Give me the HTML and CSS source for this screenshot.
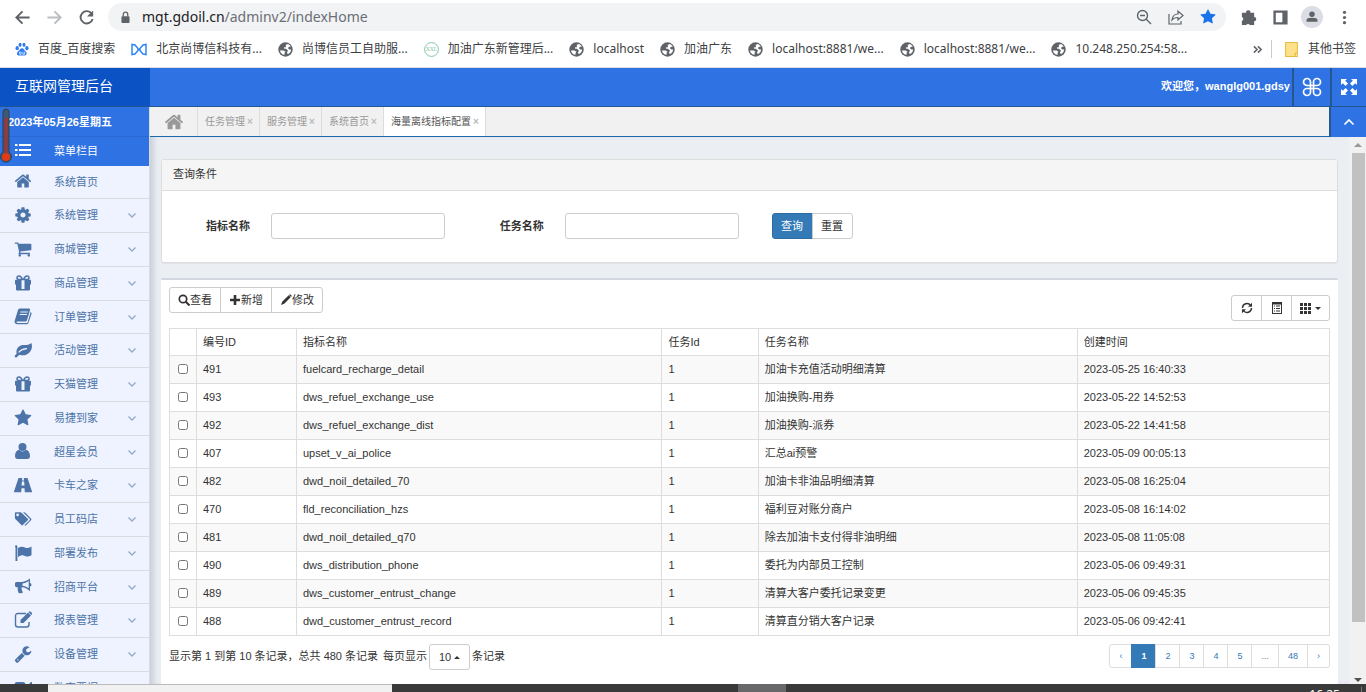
FILE: index.html
```html
<!DOCTYPE html>
<html lang="zh-CN">
<head>
<meta charset="utf-8">
<title>互联网管理后台</title>
<link rel="stylesheet" href="styles.css">
</head>
<body>
<svg class="sprite" aria-hidden="true">
  <symbol id="home" viewBox="0 0 1792 1792"><path d="M1472 992v480q0 26-19 45t-45 19h-384v-384h-256v384h-384q-26 0-45-19t-19-45v-480q0-1 .5-3t.5-3l575-474 575 474q1 2 1 6zm223-69l-62 74q-8 9-21 11h-3q-13 0-21-7l-692-577-692 577q-12 8-24 7-13-2-21-11l-62-74q-8-10-7-23.5t11-21.5l719-599q32-26 76-26t76 26l244 204v-195q0-14 9-23t23-9h192q14 0 23 9t9 23v408l219 182q10 8 11 21.5t-7 23.5z"/></symbol>
  <symbol id="cog" viewBox="0 0 1792 1792"><path d="M1152 896q0-106-75-181t-181-75-181 75-75 181 75 181 181 75 181-75 75-181zm512-109v222q0 12-8 23t-20 13l-185 28q-19 54-39 91 35 50 107 138 10 12 10 25t-9 23q-27 37-99 108t-94 71q-12 0-26-9l-138-108q-44 23-91 38-16 136-29 186-7 28-36 28h-222q-14 0-24.5-8.5t-11.5-21.5l-28-184q-49-16-90-37l-141 107q-10 9-25 9-14 0-25-11-126-114-165-168-7-10-7-23 0-12 8-23 15-21 51-66.5t54-70.5q-27-50-41-99l-183-27q-13-2-21-12.5t-8-23.5v-222q0-12 8-23t19-13l186-28q14-46 39-92-40-57-107-138-10-12-10-24 0-10 9-23 26-36 98.5-107.5t94.5-71.5q13 0 26 10l138 107q44-23 91-38 16-136 29-186 7-28 36-28h222q14 0 24.5 8.5t11.5 21.5l28 184q49 16 90 37l142-107q9-9 24-9 13 0 25 10 129 119 165 170 7 8 7 22 0 12-8 23-15 21-51 66.5t-54 70.5q26 50 41 98l183 28q13 2 21 12.5t8 23.5z"/></symbol>
  <symbol id="cart" viewBox="0 0 1792 1792"><path d="M704 1536q0 52-38 90t-90 38-90-38-38-90 38-90 90-38 90 38 38 90zm896 0q0 52-38 90t-90 38-90-38-38-90 38-90 90-38 90 38 38 90zm128-1088v512q0 24-16.5 42.5t-40.5 21.5l-1044 122q13 60 13 70 0 16-24 64h920q26 0 45 19t19 45-19 45-45 19h-1024q-26 0-45-19t-19-45q0-11 8-31.5t16-36 21.5-40 15.5-29.5l-177-823h-204q-26 0-45-19t-19-45 19-45 45-19h256q16 0 28.5 6.5t19.5 15.5 13 24.5 8 26 5.5 29.5 4.5 26h1201q26 0 45 19t19 45z"/></symbol>
  <symbol id="star" viewBox="0 0 1792 1792"><path d="M1728 647q0 22-26 48l-363 354 86 500q1 7 1 20 0 21-10.5 35.5t-30.5 14.5q-19 0-40-12l-449-236-449 236q-22 12-40 12-21 0-31.5-14.5t-10.5-35.5q0-6 2-20l86-500-364-354q-25-27-25-48 0-37 56-46l502-73 225-455q19-41 49-41t49 41l225 455 502 73q56 9 56 46z"/></symbol>
  <symbol id="wrench" viewBox="0 0 1792 1792"><path d="M448 1472q0-26-19-45t-45-19-45 19-19 45 19 45 45 19 45-19 19-45zm644-420l-682 682q-37 37-90 37-52 0-91-37l-106-108q-38-36-38-90 0-53 38-91l681-681q39 98 114.5 173.5t173.5 114.5zm634-435q0 39-23 106-47 134-164.5 217.5t-258.5 83.5q-185 0-316.5-131.5t-131.5-316.5 131.5-316.5 316.5-131.5q58 0 121.5 16.5t107.5 46.5q16 11 16 28t-16 28l-293 169v224l193 107q5-3 79-48.5t135.5-81 70.5-35.5q15 0 23.5 10t8.5 25z"/></symbol>
  <symbol id="list" viewBox="0 0 18 16"><path d="M1 1h2.500v2H1zM5 1h12v2H5zM1 6h2.500v2H1zM5 6h12v2H5zM1 11h2.500v2H1zM5 11h12v2H5z"/></symbol>
  <symbol id="gift" viewBox="0 0 18 18"><path d="M1 6.500q0-.8.800-.8h5.700v4.800H1zM10.500 5.700h5.700q.8 0 .8.800v4h-6.500zM2 10h5.500v6.500H3q-1 0-1-1zM10.500 10H16v5.500q0 1-1 1h-4.500zM7.500 16.500h3V15h-3z"/><path d="M8.500 5.500C7.500 3 6.200 2 5 2S3 3 3 4s1 1.500 2 1.500zM9.500 5.500C10.500 3 11.800 2 13 2s2 1 2 2-1 1.500-2 1.500z" fill="none" stroke="currentColor" stroke-width="1.500"/></symbol>
  <symbol id="book" viewBox="0 0 18 18"><path fill-rule="evenodd" d="M5.700 1.500H15q1.500 0 1 1.600L13 13.200q-.4 1.200-1.600 1.200H3.200q-1 .1-.7.900.3.700 1.300.700h8.900q.8 0 1-.7L16.600 5q1.300.6.900 2l-3.100 9q-.4 1.300-1.900 1.300H3Q1.200 17.200.7 15.500q-.3-.9 0-1.800L4 3q.4-1.400 1.700-1.500zM6.600 4.500l-.3 1h7.300l.3-1zM5.900 7.100l-.3 1h7.200l.3-1z"/></symbol>
  <symbol id="leaf" viewBox="0 0 18 18"><path fill-rule="evenodd" d="M17.300 2c1.300 3 .7 7-1.800 9.500-3 3-7 3.300-10 2.300L3.500 15.500c-.8.8-1.300 1.200-2.200.7-.9-.6-.8-1.300-.2-1.900l1.500-1.500C1.500 6 6.500 4 10 4c3 0 5.500-.2 7.300-2zM5 11.700c2.700-2.500 4.300-3 8-3.500V7.100C9 7.300 6.700 8.400 4.200 11z"/></symbol>
  <symbol id="user" viewBox="0 0 18 18"><circle cx="8.500" cy="5" r="4"/><path d="M5 7.800Q8.500 11 12 7.800c2.700.5 4 3.200 4 6.200 0 2-1 3-2.500 3h-10C2 17 1 16 1 14c0-3 1.300-5.700 4-6.200z"/></symbol>
  <symbol id="road" viewBox="0 0 18 18"><path fill-rule="evenodd" d="M4.500 2h3.700L8 4.500h2L9.800 2h3.700L18 15.500q.2.800-.5.800h-6.700l-.3-4h-3l-.3 4H.5q-.7 0-.5-.8zM7.900 5.500l-.4 4h3l-.4-4z"/></symbol>
  <symbol id="tags" viewBox="0 0 20 18"><path fill-rule="evenodd" d="M1 2.500Q1 1.500 2 1.500h5q1 0 2 1l6.300 6.200q.8.800 0 1.600l-5.500 5.500q-.8.800-1.600 0L2 9.500q-1-1-1-2zM4 3A1.400 1.400 0 1 0 4 6 1.400 1.400 0 0 0 4 3z"/><path d="M10 1.500h1.300q.8 0 1.600.800l6 6.200q1 1 0 2l-5.500 5.500q-.8.8-1.800 0l5.700-5.600q.8-.8 0-1.600z"/></symbol>
  <symbol id="flag" viewBox="0 0 18 18"><path d="M1 2.500a1.200 1.200 0 1 1 2.400 0V17H1.500V3.500zM4 4c3-2 5-1.500 7-.5s4 .5 6.500-1v8.700c-2.500 1.500-4.500 1.800-6.500.8s-4-.9-7 1z"/></symbol>
  <symbol id="horn" viewBox="0 0 18 18"><path fill-rule="evenodd" d="M16 1.500v12.800C13 11.500 10.800 10.500 8 10.200c-1 .8-.5 1.500 0 2.200-.5 1 .2 1.800 1 2.500-1 1.800-3.600 1.700-4.500.8-.4-1.500-1.300-3.200-.6-5.500H2.500Q1 10 1 8.500v-2Q1 5 2.500 5H7c3 0 6-1.200 9-3.500zM14.700 4C12.500 5.500 10.500 6.300 8.500 6.400v2.400c2 .2 4 .9 6.200 2.500z"/><path d="M16 6q1.500.3 1.500 1.700T16 9.500z"/></symbol>
  <symbol id="edit" viewBox="0 0 18 18"><path d="M12 2.500H4Q1.500 2.500 1.500 5v8.500Q1.500 16 4 16h8.500q2.500 0 2.500-2.500V11" fill="none" stroke="currentColor" stroke-width="1.400"/><path d="M14 1.500l3 3-7.500 7.500h-3V9zM15 .7q.9-.8 1.800.1l1 1q.9.9 0 1.800l-.4.400-3-3z"/></symbol>
  <symbol id="video" viewBox="0 0 18 18"><path d="M3 3h6q2.500 0 2.500 2.500v7Q11.500 15 9 15H3Q.5 15 .5 12.500v-7Q.5 3 3 3zM12 8l5-5h1v12h-1l-5-5z"/></symbol>
  <symbol id="down" viewBox="0 0 10 10"><path d="M1.500 3.500L5 7l3.500-3.500" fill="none" stroke="currentColor" stroke-width="1.300"/></symbol>
  <symbol id="globe" viewBox="0 0 16 16"><circle cx="8" cy="8" r="7.700"/><path d="M2 9h4L8 10.500l-1 1v2.200Q3 13 2 9zM8.300 3l2.500-.8q2 1 2.900 2.900L12 5l-1.500 1.500L12 8h2q-.2 3.500-3.500 5L9.500 11l1.300-1.600L8.500 7.300H6.500V5.500h2z" fill="#fff"/></symbol>
</svg>

<header class="browser">
  <div class="toolbar">
    <button class="nav" aria-label="后退"><svg viewBox="0 0 18 18"><path d="M16.500 9H3M9 2.500L2.500 9 9 15.500" class="line"/></svg></button>
    <button class="nav faded" aria-label="前进"><svg viewBox="0 0 18 18"><path d="M1.500 9h13.500M9 2.500L15.500 9 9 15.500" class="line"/></svg></button>
    <button class="nav" aria-label="刷新"><svg viewBox="0 0 18 18"><path d="M14.500 5A6.500 6.500 0 1 0 15.500 10.500" class="line"/><path d="M16 1.500V8H9.500z"/></svg></button>
    <div class="address">
      <svg class="lock" viewBox="0 0 10 14"><path d="M2.500 6V3.500a2.500 2.500 0 0 1 5 0V6" fill="none" stroke="currentColor" stroke-width="1.400"/><rect x=".5" y="5.500" width="9" height="7.500" rx="1"/></svg>
      <div class="url"><b>mgt.gdoil.cn</b>/adminv2/indexHome</div>
      <button aria-label="缩放"><svg viewBox="0 0 16 16"><circle cx="6.500" cy="6.500" r="5" class="line thin"/><path d="M10 10l5 5M4 6.500h5" class="line thin"/></svg></button>
      <button aria-label="分享"><svg viewBox="0 0 16 16"><path d="M1 5v10h12v-3M4 11c.5-4 2.500-6 6-6V2l5 4.500-5 4.500V8.500c-3 0-4.500.5-6 2.500z" class="line fine"/></svg></button>
      <button class="blue" aria-label="收藏"><svg><use href="#star"/></svg></button>
    </div>
    <div class="tools">
      <button aria-label="扩展程序"><svg viewBox="0 0 18 18"><path d="M2 4h4.500a2.300 2.300 0 1 1 4.500 0h4v4.500a2.200 2.200 0 1 1 0 4.500v4h-4.500a2.300 2.300 0 0 0-4 0H2v-4.500a2.100 2.100 0 0 0 0-4z"/></svg></button>
      <button aria-label="侧边栏"><svg viewBox="0 0 18 18"><path fill-rule="evenodd" d="M1.500 1.500h15v15h-15zM4 4v10h7V4z"/></svg></button>
      <button class="avatar" aria-label="用户"><svg viewBox="0 0 18 18"><circle cx="9" cy="5.500" r="3.500"/><path d="M2 15v-2q0-3 7-3t7 3v2z"/></svg></button>
      <button aria-label="菜单"><svg viewBox="0 0 18 18"><circle cx="9" cy="3.500" r="1.700"/><circle cx="9" cy="9" r="1.700"/><circle cx="9" cy="14.500" r="1.700"/></svg></button>
    </div>
  </div>
  <nav class="bookmarks">
    <a href="#"><svg class="baidu" viewBox="0 0 16 16"><ellipse cx="2.500" cy="7" rx="1.900" ry="2.400"/><ellipse cx="5.800" cy="3.200" rx="1.700" ry="2.400"/><ellipse cx="10.300" cy="3.200" rx="1.700" ry="2.400"/><ellipse cx="13.600" cy="7" rx="1.900" ry="2.400"/><path d="M8 7c2 0 2.500 2.200 4 3.500 2.500 2.500 1 5-1.500 5-1.500 0-3.500-.3-5 0-3 .5-4.500-2.700-1.800-5C5.500 9 6 7 8 7z"/><path d="M5 11.500h2v2.500H5.500zM9 11v3h2v-3" fill="none" stroke="#fff" stroke-width=".8"/></svg>百度_百度搜索</a>
    <a href="#"><svg class="ribbon" viewBox="0 0 16 14"><path d="M1 2v10l3-.5L7 8V6L4 2.500zM15 2v10l-3-.5L9 8V6l3-3.500zM7 8l2-2" fill="none" stroke="currentColor" stroke-width="1.500"/></svg>北京尚博信科技有...</a>
    <a href="#"><svg><use href="#globe"/></svg>尚博信员工自助服...</a>
    <a href="#"><svg class="ring" viewBox="0 0 16 16"><circle cx="8" cy="8" r="7.400" fill="none" stroke="currentColor"/><text x="8" y="10" text-anchor="middle">XXL</text></svg>加油广东新管理后...</a>
    <a href="#"><svg><use href="#globe"/></svg>localhost</a>
    <a href="#"><svg><use href="#globe"/></svg>加油广东</a>
    <a href="#"><svg><use href="#globe"/></svg>localhost:8881/we...</a>
    <a href="#"><svg><use href="#globe"/></svg>localhost:8881/we...</a>
    <a href="#"><svg><use href="#globe"/></svg>10.248.250.254:58...</a>
    <button class="more" aria-label="更多书签"><svg viewBox="0 0 10 10"><path d="M1 1.500L4.500 5 1 8.500M5.500 1.500L9 5 5.500 8.500" fill="none" stroke="currentColor" stroke-width="1.700"/></svg></button>
    <a href="#" class="others"><svg class="folder" viewBox="0 0 12 14"><path d="M.5.500h11v10h-2v3h-9z" fill="#ffe08a" stroke="#e8bd3f"/><path d="M9.500 10.500h2v3h-2z" fill="#fff3c4" stroke="#e8bd3f"/></svg>其他书签</a>
  </nav>
</header>

<div class="app">
  <header class="top">
    <div class="brand">互联网管理后台</div>
    <div class="welcome">欢迎您，wanglg001.gdsy</div>
    <button class="square" aria-label="主题"><svg viewBox="0 0 20 20"><path d="M8.500 8.500H5A3.500 3.500 0 1 1 8.500 5zM11.500 8.500V5A3.500 3.500 0 1 1 15 8.500zM8.500 11.500V15A3.500 3.500 0 1 1 5 11.500zM11.500 11.500H15A3.500 3.500 0 1 1 11.500 15zM8.500 8.500v3M11.500 8.500v3M8.500 8.500h3M8.500 11.500h3" fill="none" stroke="currentColor" stroke-width="1.700"/></svg></button>
    <button class="square" aria-label="全屏"><svg class="full" viewBox="0 0 16 16"><path d="M0 0h6L4.200 1.800 7 4.600 4.600 7 1.800 4.200 0 6zM16 0v6l-1.800-1.800L11.400 7 9 4.600l2.800-2.800L10 0zM0 16v-6l1.800 1.800L4.600 9 7 11.400l-2.800 2.800L6 16zM16 16h-6l1.800-1.800L9 11.400 11.400 9l2.800 2.800L16 10z"/></svg></button>
  </header>

  <aside class="side">
    <div class="date">2023年05月26星期五</div>
    <svg class="thermo" viewBox="0 0 12 56"><path d="M3 4q0-3 3-3t3 3v40q2.500 2 2.500 5A5.500 5.500 0 1 1 3 44z" fill="#3f5873" stroke="#30404f"/><path d="M5 10h2v35H5z" fill="#d5210e"/><circle cx="6" cy="49" r="4" fill="#e23a12"/></svg>
    <div class="title"><svg class="icon"><use href="#list"/></svg>菜单栏目</div>
    <ul class="menu">
      <li><a href="#"><svg class="icon"><use href="#home"/></svg>系统首页</a></li>
      <li><a href="#"><svg class="icon"><use href="#cog"/></svg>系统管理<svg class="arrow"><use href="#down"/></svg></a></li>
      <li><a href="#"><svg class="icon"><use href="#cart"/></svg>商城管理<svg class="arrow"><use href="#down"/></svg></a></li>
      <li><a href="#"><svg class="icon"><use href="#gift"/></svg>商品管理<svg class="arrow"><use href="#down"/></svg></a></li>
      <li><a href="#"><svg class="icon"><use href="#book"/></svg>订单管理<svg class="arrow"><use href="#down"/></svg></a></li>
      <li><a href="#"><svg class="icon"><use href="#leaf"/></svg>活动管理<svg class="arrow"><use href="#down"/></svg></a></li>
      <li><a href="#"><svg class="icon"><use href="#gift"/></svg>天猫管理<svg class="arrow"><use href="#down"/></svg></a></li>
      <li><a href="#"><svg class="icon"><use href="#star"/></svg>易捷到家<svg class="arrow"><use href="#down"/></svg></a></li>
      <li><a href="#"><svg class="icon"><use href="#user"/></svg>超星会员<svg class="arrow"><use href="#down"/></svg></a></li>
      <li><a href="#"><svg class="icon"><use href="#road"/></svg>卡车之家<svg class="arrow"><use href="#down"/></svg></a></li>
      <li><a href="#"><svg class="icon"><use href="#tags"/></svg>员工码店<svg class="arrow"><use href="#down"/></svg></a></li>
      <li><a href="#"><svg class="icon"><use href="#flag"/></svg>部署发布<svg class="arrow"><use href="#down"/></svg></a></li>
      <li><a href="#"><svg class="icon"><use href="#horn"/></svg>招商平台<svg class="arrow"><use href="#down"/></svg></a></li>
      <li><a href="#"><svg class="icon"><use href="#edit"/></svg>报表管理<svg class="arrow"><use href="#down"/></svg></a></li>
      <li><a href="#"><svg class="icon"><use href="#wrench"/></svg>设备管理<svg class="arrow"><use href="#down"/></svg></a></li>
      <li><a href="#"><svg class="icon"><use href="#video"/></svg>数字票据<svg class="arrow"><use href="#down"/></svg></a></li>
    </ul>
  </aside>

  <nav class="tabs">
    <a href="#" class="hometab" aria-label="首页"><svg><use href="#home"/></svg></a>
    <a href="#">任务管理<i>×</i></a>
    <a href="#">服务管理<i>×</i></a>
    <a href="#">系统首页<i>×</i></a>
    <a href="#" class="active">海量离线指标配置<i>×</i></a>
    <button class="collapse" aria-label="收起"><svg viewBox="0 0 12 8"><path d="M1.500 6.500L6 2l4.500 4.500" fill="none" stroke="currentColor" stroke-width="1.700"/></svg></button>
  </nav>

  <main class="content">
    <section class="query">
      <h2>查询条件</h2>
      <form>
        <div class="field"><label for="metric">指标名称</label><input id="metric" type="text"></div>
        <div class="field"><label for="task">任务名称</label><input id="task" type="text"></div>
        <div class="group submit"><button type="button" class="primary">查询</button><button type="button">重置</button></div>
      </form>
    </section>

    <section class="list">
      <div class="actions">
        <div class="group">
          <button><svg viewBox="0 0 12 12"><circle cx="5" cy="5" r="3.700" fill="none" stroke="currentColor" stroke-width="1.700"/><path d="M7.500 7.500l4 4" stroke="currentColor" stroke-width="2"/></svg>查看</button>
          <button><svg viewBox="0 0 12 12"><path d="M4.700 1h2.600v3.700H11v2.600H7.300V11H4.700V7.300H1V4.700h3.700z"/></svg>新增</button>
          <button><svg viewBox="0 0 12 12"><path d="M8.700 1.300l2 2-6.500 6.500L1 11l1.200-3.200zM9.300.7q.7-.7 1.400 0l.6.600q.7.700 0 1.400l-.2.200-2-2z"/></svg>修改</button>
        </div>
        <div class="group view">
          <button aria-label="刷新"><svg viewBox="0 0 12 12"><path d="M1.500 6A4.500 4.500 0 0 1 9.600 3.300M10.500 6A4.500 4.500 0 0 1 2.400 8.700" fill="none" stroke="currentColor" stroke-width="1.400"/><path d="M11 .8v4H7zM1 11.200v-4h4z"/></svg></button>
          <button aria-label="切换视图"><svg viewBox="0 0 12 12"><path fill-rule="evenodd" d="M1 0h10v12H1zM2 2.500V11h8V2.500z"/><path d="M3 3.500h1v1H3zM5 3.500h4v1H5zM3 6h1v1H3zM5 6h4v1H5zM3 8.500h1v1H3zM5 8.500h4v1H5z"/></svg></button>
          <button aria-label="列"><svg viewBox="0 0 12 12"><path d="M0 1h3v3H0zM4 1h3v3H4zM8 1h3v3H8zM0 5h3v3H0zM4 5h3v3H4zM8 5h3v3H8zM0 9h3v3H0zM4 9h3v3H4zM8 9h3v3H8z"/></svg><span class="caret"></span></button>
        </div>
      </div>

      <table>
        <colgroup><col class="c-check"><col class="c-id"><col class="c-name"><col class="c-task"><col class="c-taskname"><col></colgroup>
        <thead><tr><th></th><th>编号ID</th><th>指标名称</th><th>任务Id</th><th>任务名称</th><th>创建时间</th></tr></thead>
        <tbody>
          <tr><td><input type="checkbox" aria-label="选择 491"></td><td>491</td><td>fuelcard_recharge_detail</td><td>1</td><td>加油卡充值活动明细清算</td><td>2023-05-25 16:40:33</td></tr>
          <tr><td><input type="checkbox" aria-label="选择 493"></td><td>493</td><td>dws_refuel_exchange_use</td><td>1</td><td>加油换购-用券</td><td>2023-05-22 14:52:53</td></tr>
          <tr><td><input type="checkbox" aria-label="选择 492"></td><td>492</td><td>dws_refuel_exchange_dist</td><td>1</td><td>加油换购-派券</td><td>2023-05-22 14:41:58</td></tr>
          <tr><td><input type="checkbox" aria-label="选择 407"></td><td>407</td><td>upset_v_ai_police</td><td>1</td><td>汇总ai预警</td><td>2023-05-09 00:05:13</td></tr>
          <tr><td><input type="checkbox" aria-label="选择 482"></td><td>482</td><td>dwd_noil_detailed_70</td><td>1</td><td>加油卡非油品明细清算</td><td>2023-05-08 16:25:04</td></tr>
          <tr><td><input type="checkbox" aria-label="选择 470"></td><td>470</td><td>fld_reconciliation_hzs</td><td>1</td><td>福利豆对账分商户</td><td>2023-05-08 16:14:02</td></tr>
          <tr><td><input type="checkbox" aria-label="选择 481"></td><td>481</td><td>dwd_noil_detailed_q70</td><td>1</td><td>除去加油卡支付得非油明细</td><td>2023-05-08 11:05:08</td></tr>
          <tr><td><input type="checkbox" aria-label="选择 490"></td><td>490</td><td>dws_distribution_phone</td><td>1</td><td>委托为内部员工控制</td><td>2023-05-06 09:49:31</td></tr>
          <tr><td><input type="checkbox" aria-label="选择 489"></td><td>489</td><td>dws_customer_entrust_change</td><td>1</td><td>清算大客户委托记录变更</td><td>2023-05-06 09:45:35</td></tr>
          <tr><td><input type="checkbox" aria-label="选择 488"></td><td>488</td><td>dwd_customer_entrust_record</td><td>1</td><td>清算直分销大客户记录</td><td>2023-05-06 09:42:41</td></tr>
        </tbody>
      </table>

      <footer class="paging">
        <span>显示第 1 到第 10 条记录，总共 480 条记录</span>
        <span class="per">每页显示 <button class="size">10 <span class="caret up"></span></button> 条记录</span>
        <nav class="pages"><a href="#">‹</a><a href="#" class="on">1</a><a href="#">2</a><a href="#">3</a><a href="#">4</a><a href="#">5</a><a href="#" class="off">...</a><a href="#">48</a><a href="#">›</a></nav>
      </footer>
    </section>
  </main>

  <div class="scroll"><span class="tri"></span><span class="thumb"></span><span class="tri end"></span></div>
</div>

<footer class="taskbar"><span class="search"></span><span class="running"></span><time>16:25</time></footer>
</body>
</html>
```
FILE: styles.css
```css
* { box-sizing: border-box; }
body {
  margin: 0;
  height: 100vh;
  display: flex;
  flex-direction: column;
  overflow: hidden;
  font: 11px/16px "Liberation Sans", "Noto Sans CJK SC", sans-serif;
  color: #333;
  background: #fff;
}
a { color: inherit; text-decoration: none; }
svg { fill: currentColor; flex: none; }
button {
  font: inherit;
  color: inherit;
  background: none;
  border: 0;
  padding: 0;
  display: flex;
  align-items: center;
  justify-content: center;
}
.sprite { position: absolute; width: 0; height: 0; }
.line { fill: none; stroke: currentColor; stroke-width: 2; }
.thin { stroke-width: 1.400; }
.fine { stroke-width: 1.200; }

/* browser chrome */
.browser { flex: none; border-bottom: 1px solid #d9dce0; color: #5f6368; }
.toolbar { display: flex; align-items: center; height: 34px; padding: 0 11px 0 13px; }
.nav { width: 18px; margin-right: 14px; }
.nav svg { width: 17px; height: 17px; }
.faded { color: #bbbdc0; }
.address {
  flex: 1;
  display: flex;
  align-items: center;
  gap: 16px;
  height: 28px;
  margin-left: -1px;
  padding: 0 10px 0 13px;
  border-radius: 14px;
  background: #f1f3f4;
}
.address svg { width: 16px; height: 16px; }
.address .lock { width: 9px; height: 13px; }
.url { flex: 1; margin-left: -4px; font: 14px/20px "Noto Sans", sans-serif; color: #6b6f74; }
.url b { font-weight: 400; color: #202124; }
.blue { color: #1a73e8; }
.tools { display: flex; align-items: center; gap: 10px; padding-left: 11px; }
.tools button { width: 22px; height: 22px; }
.tools svg { width: 17px; height: 17px; }
.tools .avatar { border-radius: 50%; background: #dadde3; }
.avatar svg { width: 14px; height: 14px; }
.bookmarks {
  display: flex;
  align-items: center;
  gap: 16px;
  height: 33px;
  padding: 0 10px 3px 15px;
  font: 12px/18px "Noto Sans", "Noto Sans CJK SC", sans-serif;
  white-space: nowrap;
}
.bookmarks a { display: flex; align-items: center; gap: 9px; color: #3c4043; }
.bookmarks svg { width: 15px; height: 15px; color: #5f6368; }
.bookmarks .baidu { width: 14px; height: 14px; color: #2e7cf0; }
.bookmarks .ribbon { width: 16px; color: #2f86f6; }
.bookmarks .ring { color: #7cc5a2; }
.ring text { font: 6px "Liberation Serif", serif; }
.bookmarks .more { margin-left: auto; }
.bookmarks .more svg { width: 9px; height: 9px; }
.bookmarks .others { margin-left: -7px; padding-left: 12px; border-left: 1px solid #c8cacd; }

/* application frame */
.app {
  flex: 1;
  min-height: 0;
  display: grid;
  grid-template: 39px 30px minmax(0, 1fr) / 150px minmax(0, 1fr) 17px;
}
.top {
  grid-column: 1 / -1;
  display: flex;
  align-items: stretch;
  background: #2e72e3;
  border-bottom: 1px solid #24568f;
  color: #fff;
}
.brand { width: 150px; padding: 10px 15px; font-size: 14px; line-height: 17px; background: #0b52c5; }
.welcome { margin-left: auto; padding: 10px 2px 0 0; font-weight: 700; }
.square { width: 38px; border-left: 2px solid #24568f; }
.square:last-child { width: 36px; }
.square svg { width: 20px; height: 20px; }
.square .full { width: 16px; height: 16px; }
.side {
  grid-row: 2 / 4;
  position: relative;
  overflow: hidden;
  background: #eff3ff;
  border-right: 1px solid #d6dae2;
}
.date { height: 29px; padding: 7px 8px; background: #2e72e3; color: #fff; font-weight: 700; white-space: nowrap; }
.title, .menu a { display: flex; align-items: center; height: 100%; padding: 0 12px 1px 14px; }
.title { height: 30px; background: #2e72e3; color: #fff; border-top: 1px solid #2968d2; }
.thermo { position: absolute; left: 0; top: 1px; width: 12px; height: 56px; }
.icon { width: 18px; height: 18px; margin-right: 22px; }
.title .icon { height: 16px; }
.menu .icon { margin-bottom: 1px; }
.menu { margin: 0; padding: 0; list-style: none; color: #4c74a8; }
.menu li { height: 34px; border-bottom: 1px solid #d8dbe0; }
.menu li:nth-child(4n+1) { height: 33px; }
.arrow { width: 10px; height: 10px; margin-left: auto; color: #93a9c9; }
.tabs {
  grid-column: 2 / -1;
  display: flex;
  background: #f1f1f1;
  border-bottom: 1px solid #1a6aad;
  color: #999;
  font-size: 10px;
}
.tabs a {
  display: flex;
  align-items: center;
  gap: 2px;
  padding: 0 6px 0 7px;
  border-right: 1px solid #ddd;
}
.tabs .hometab { width: 48px; padding: 0; justify-content: center; }
.hometab svg { width: 20px; height: 20px; }
.tabs i { font-style: normal; font-weight: 700; color: #bbb; width: 6px; text-align: center; }
.tabs .active { background: #fff; color: #555; }
.collapse { width: 37px; margin-left: auto; background: #2e72e3; color: #fff; border-left: 2px solid #24568f; margin-bottom: -1px; }
.collapse svg { width: 12px; height: 8px; }

/* page */
.content {
  grid-column: 2;
  display: flex;
  flex-direction: column;
  padding: 22px 11px 0;
  background: #ebeef3;
  box-shadow: inset 6px 0 6px -3px #c5cad2;
  min-height: 0;
}
.query { border: 1px solid #ddd; border-radius: 3px; background: #fff; box-shadow: 0 1px 1px #0000000d; margin-bottom: 15px; }
.query h2 { margin: 0; padding: 6px 11px 8px; font-size: 11px; font-weight: 400; background: #f5f5f5; border-bottom: 1px solid #ddd; }
.query form { display: grid; grid-template-columns: 1fr 1fr 2fr; padding: 22px 0 23px; }
.field { display: flex; align-items: center; gap: 21px; padding-right: 11px; }
.field label { width: 88px; text-align: right; font-weight: 700; }
.field input { flex: 1; min-width: 0; height: 26px; font: inherit; border: 1px solid #ccc; border-radius: 3px; background: #fff; }
.group { display: flex; }
.group button { height: 26px; padding: 0 8px; border: 1px solid #ccc; margin-left: -1px; background: #fff; }
.group button:first-child { border-radius: 3px 0 0 3px; margin-left: 0; }
.group button:last-child { border-radius: 0 3px 3px 0; }
.submit { padding-left: 22px; }
.submit button { width: 41px; }
.group .primary { background: #337ab7; border-color: #2e6da4; color: #fff; }
.list { flex: 1; min-height: 0; padding: 7px 8px 0; background: #fff; border-top: 2px solid #d2d6de; border-radius: 2px 2px 0 0; }
.actions { display: flex; justify-content: space-between; height: 41px; }
.actions svg { width: 12px; height: 12px; }
.view { padding-top: 8px; }
.view button { width: 31px; }
.view button:last-child { width: 39px; }
.caret { border: 3px solid transparent; border-top-color: currentColor; border-bottom: 0; margin-left: 3px; }
.caret.up { border-bottom: 3px solid currentColor; border-top: 0; }
table { width: 100%; table-layout: fixed; border-collapse: collapse; }
.c-check { width: 27px; }
.c-id { width: 100px; }
.c-name { width: 31.500%; }
.c-task { width: 8.300%; }
.c-taskname { width: 27.500%; }
th, td { height: 28px; padding: 0 6px; border: 1px solid #ddd; text-align: left; font-weight: 400; white-space: nowrap; }
th { height: 27px; }
td { padding-bottom: 2px; }
tbody tr:nth-child(odd) { background: #f9f9f9; }
td input { display: block; width: 10px; height: 10px; margin: 0 auto; }
td:first-child { padding: 0 0 2px; }
.paging { display: flex; align-items: flex-start; gap: 5px; padding-top: 8px; line-height: 25px; white-space: nowrap; }
.per { display: flex; gap: 2px; }
.size { height: 26px; width: 41px; border: 1px solid #ccc; border-radius: 3px; }
.pages { display: flex; margin-left: auto; font-size: 9px; line-height: 22px; color: #337ab7; }
.pages a { min-width: 25px; padding: 0 9px; border: 1px solid #ddd; margin-left: -1px; text-align: center; }
.pages a:first-child, .pages a:last-child { min-width: 23px; }
.pages a:first-child { border-radius: 3px 0 0 3px; }
.pages a:last-child { border-radius: 0 3px 3px 0; }
.pages .on { background: #337ab7; border-color: #337ab7; color: #fff; font-weight: 700; }
.pages .off { color: #777; }
.scroll { display: flex; flex-direction: column; align-items: center; justify-content: space-between; background: #f1f1f1; padding: 6px 1px 2px 2px; }
.tri { border: 4px solid transparent; border-bottom-color: #999; border-top: 0; }
.tri.end { border-top: 4px solid #505050; border-bottom: 0; }
.thumb { flex: 0 0 87%; width: 13px; margin: 6px 0 auto; background: #c1c1c1; }

/* desktop edge */
.taskbar { flex: none; height: 8px; display: flex; overflow: hidden; background: #3a3a3b; color: #fff; }
.search { flex: 0 0 344px; margin-left: 48px; background: #f1f1f1; border-top: 1px solid #bbb; }
.running { flex: 0 0 48px; margin-left: 346px; background: #68686a; }
.taskbar time { margin: 3px 4px 0 auto; padding-right: 21px; border-right: 1px solid #777; font: 12px/16px "Noto Sans", sans-serif; }
```
